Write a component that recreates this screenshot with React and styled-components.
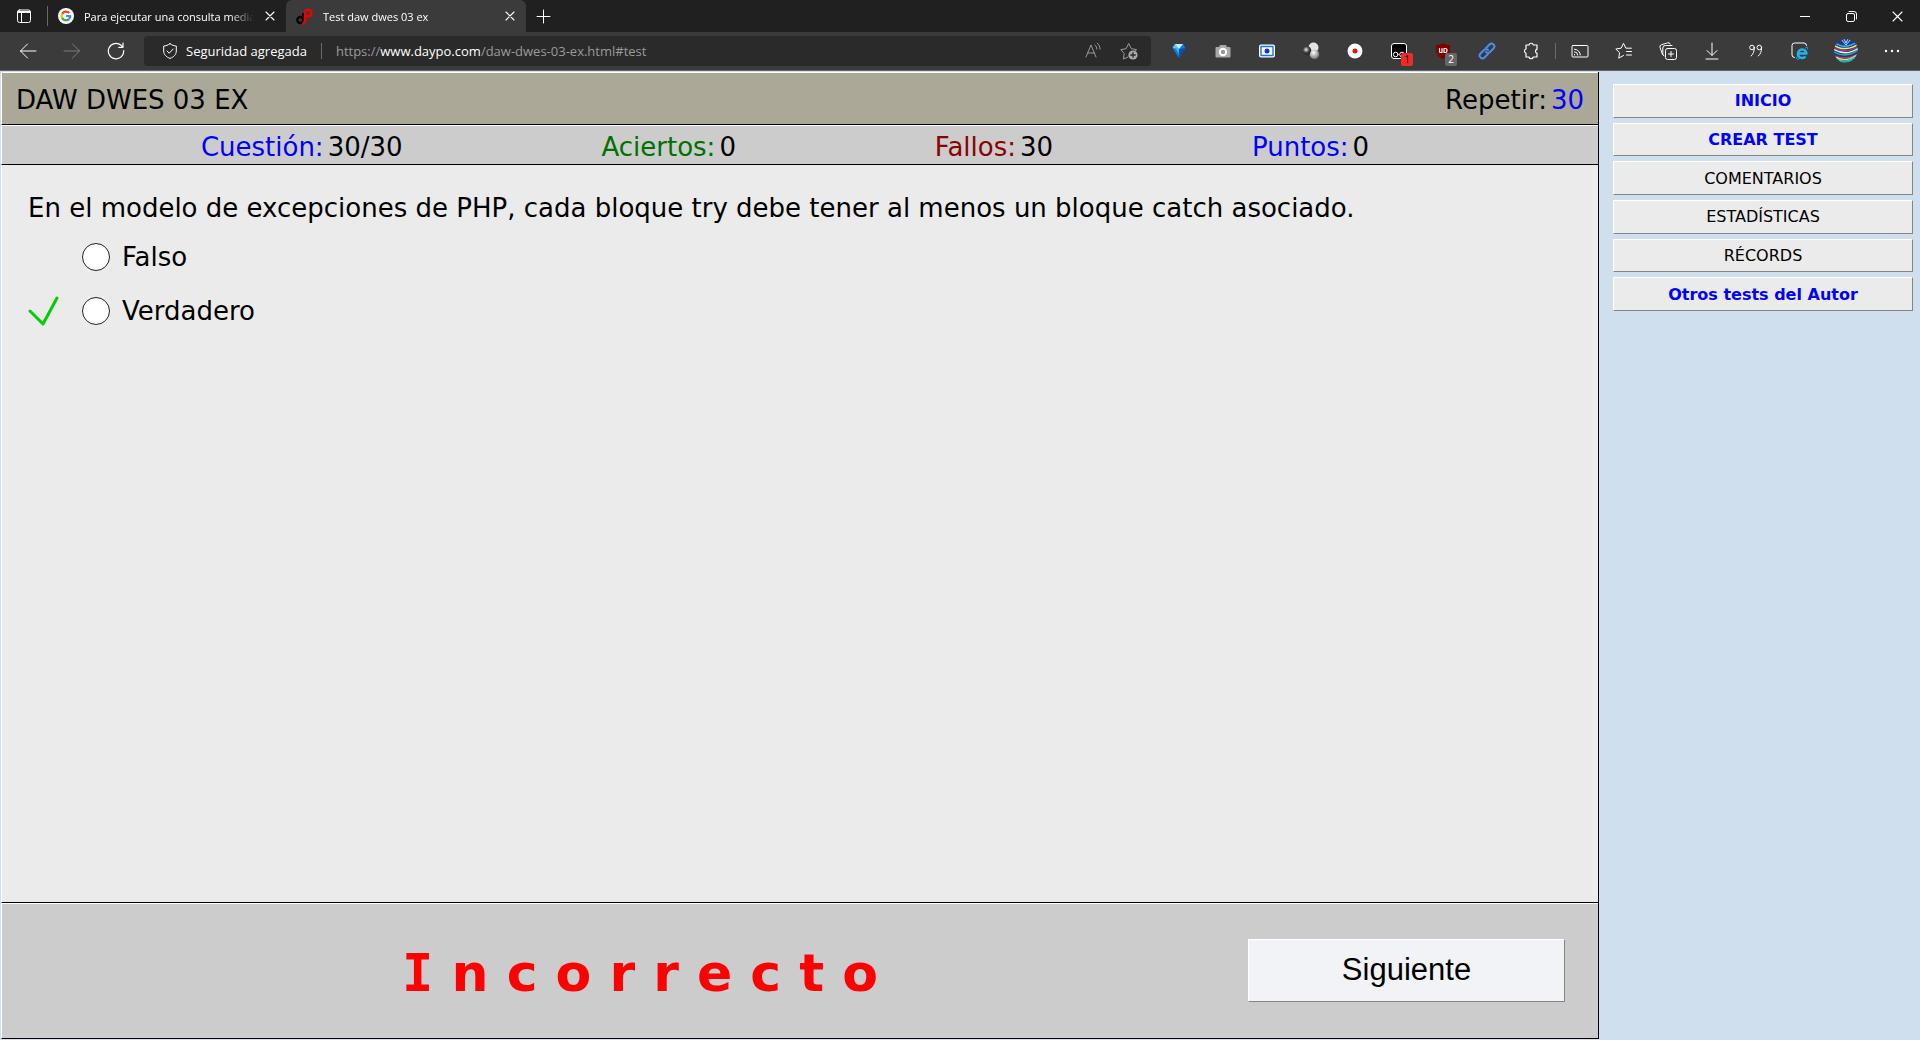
import React from "react";
import styled, { createGlobalStyle } from "styled-components";

const GlobalStyle = createGlobalStyle`
  *, *::before, *::after { box-sizing: border-box; }
  body {
    margin: 0;
    background: #cfdfee;
    font-family: "DejaVu Sans", Verdana, sans-serif;
    color: #000;
  }
`;

const Window = styled.div`
  display: flex;
  flex-direction: column;
  min-height: 100vh;
`;

/* ---------- browser chrome ---------- */

const Chrome = styled.header`
  font-family: "Open Sans", "Noto Sans", sans-serif;
  font-size: 13px;
  color: #fff;
  background: #3b3b3b;
  border-bottom: 1px solid #64646a;
`;

const TabStrip = styled.div`
  display: flex;
  height: 32px;
  background: #202020;
`;

const IconButton = styled.button`
  display: flex;
  align-items: center;
  justify-content: center;
  flex: 0 0 ${(p) => p.$width || 44}px;
  height: ${(p) => p.$height || 38}px;
  padding: 0;
  border: 0;
  background: none;
  color: ${(p) => p.$color || "#fff"};
  position: relative;

  svg { display: block; }
`;

const Divider = styled.span`
  flex: 0 0 1px;
  height: ${(p) => p.$height || 16}px;
  margin: 0 ${(p) => p.$gap || 0}px;
  background: #6a6a6a;
  align-self: center;
`;

const Tab = styled.div`
  display: flex;
  align-items: center;
  flex: 0 1 ${(p) => p.$width}px;
  min-width: 0;
  height: 32px;
  padding-left: 10px;
  gap: 10px;
  border-radius: 6px 6px 0 0;
  background: ${(p) => (p.$active ? "#3b3b3b" : "transparent")};
  font-size: 11px;

  svg { flex: none; }
`;

const TabTitle = styled.span`
  flex: 1;
  min-width: 0;
  white-space: nowrap;
  mask-image: linear-gradient(to left, transparent, #000 24px);
`;

const TabClose = styled(IconButton)`
  flex-basis: 32px;
  height: 32px;
  margin-left: -10px;
`;

const Spacer = styled.div`
  flex: 1;
`;

const Toolbar = styled.div`
  display: flex;
  align-items: center;
  height: 38px;
  padding: 0 6px;
`;

const AddressBar = styled.div`
  display: flex;
  align-items: center;
  flex: 1;
  min-width: 0;
  height: 30px;
  margin: 0 6px;
  padding-left: 18px;
  border-radius: 4px;
  background: #2a2a2a;
  white-space: nowrap;
`;

const SiteSecurity = styled.button`
  display: flex;
  align-items: center;
  gap: 8px;
  padding: 0;
  border: 0;
  background: none;
  color: #fff;
  font: inherit;
`;

const Url = styled.span`
  flex: 1;
  min-width: 0;
  overflow: hidden;
  color: #9a9a9a;

  b { color: #fff; font-weight: 400; }
`;

const Badge = styled.span`
  position: absolute;
  right: 8px;
  bottom: 4px;
  width: 12px;
  height: 13px;
  border-radius: 2px;
  background: ${(p) => p.$bg};
  color: ${(p) => p.$fg};
  font: 10px/13px "Open Sans", sans-serif;
  text-align: center;
`;

const line = { fill: "none", stroke: "currentColor", strokeLinecap: "round", strokeLinejoin: "round" };

const Icon = ({ size = 18, children, ...rest }) => (
  <svg width={size} height={size} viewBox={`0 0 ${size} ${size}`} aria-hidden="true" {...line} {...rest}>
    {children}
  </svg>
);

const TabActionsIcon = () => (
  <Icon size={16}>
    <rect x="1.5" y="2" width="13" height="12.5" rx="2" />
    <path d="M1.5 4.5h13M2 3.5h12M5.5 4.5v10" />
  </Icon>
);
const GoogleIcon = () => (
  <Icon size={16} stroke="none">
    <circle cx="8" cy="8" r="8" fill="#fff" />
    <g fill="none" strokeWidth="2.2" strokeLinecap="butt">
      <path d="M4.3 5.9A4.3 4.3 0 0 1 11.2 5" stroke="#ea4335" />
      <path d="M4.4 10.3a4.3 4.3 0 0 1 0-4.6" stroke="#fbbc05" />
      <path d="M11 11.1a4.3 4.3 0 0 1-6.8-1.2" stroke="#34a853" />
      <path d="M8 8h4.3c0 1.3-.5 2.4-1.5 3.2" stroke="#4285f4" />
    </g>
  </Icon>
);
const DaypoIcon = () => (
  <Icon size={17} strokeWidth="2.4" strokeLinecap="butt">
    <circle cx="4.3" cy="12" r="3" stroke="#050505" />
    <path d="M7.4 15.5V5" stroke="#050505" />
    <path d="M9 13V4.5a3.2 3.2 0 1 1 3.2 3.7H9" stroke="#f00000" />
    <path d="M9 12c0 2-.6 3.3-2.6 3.6" stroke="#f00000" />
  </Icon>
);
const CrossIcon = ({ size = 10 }) => (
  <Icon size={size} strokeWidth="1.1">
    <path d={`M1 1l${size - 2} ${size - 2}M${size - 1} 1l-${size - 2} ${size - 2}`} />
  </Icon>
);
const PlusIcon = () => <Icon size={15}><path d="M7.5 1v13M1 7.5h13" /></Icon>;
const MinimizeIcon = () => <Icon size={10} strokeLinecap="butt"><path d="M0 5.5h10" /></Icon>;
const RestoreIcon = () => (
  <Icon size={11}>
    <rect x=".5" y="2.5" width="8" height="8" rx="1.5" />
    <path d="M3 .5h5a2.5 2.5 0 0 1 2.5 2.5v5" />
  </Icon>
);
const BackIcon = () => <Icon><path d="M17 9H1.5M8.500 2L1.5 9l7 7" /></Icon>;
const ForwardIcon = () => <Icon><path d="M1 9h15.5M9.500 2l7 7-7 7" /></Icon>;
const ReloadIcon = () => (
  <Icon strokeWidth="1.2">
    <path d="M16.700 8.500a7.700 7.700 0 1 1-2.600-5.200l1.900 1.900M16 1v4.300h-4.300" />
  </Icon>
);
const ShieldIcon = () => (
  <Icon size={16}>
    <path d="M8 .7c2 1.500 4 2.200 6.300 2.300v5c0 3.500-2.500 6-6.300 7.400C4.200 14 1.700 11.500 1.700 8V3C4 2.900 6 2.200 8 .7z" />
    <path d="M5 8l2.200 2.200L11.200 6" />
  </Icon>
);
const ReadAloudIcon = () => (
  <Icon>
    <path d="M2 15L7 3l5 12M3.700 11h6.600" />
    <path d="M11 3c1.200 1 1.800 2.300 1.800 4M13.300 1.200c1.700 1.600 2.700 3.500 2.700 6" />
  </Icon>
);
const AddFavoriteIcon = () => (
  <Icon>
    <path d="M8 15l-4.600 2 .8-5.500L.8 7.600l5.300-.9L8.700 1.500l2.600 5.200 5.300.9-1.500 1.500" />
    <circle cx="13" cy="13" r="4.600" fill="#aaa" stroke="none" />
    <path d="M13 10.700v4.600M10.700 13h4.600" stroke="#2a2a2a" strokeWidth="1.3" />
  </Icon>
);
const GemIcon = () => (
  <Icon size={16} stroke="none">
    <path d="M1.500 5l2.500-4h8L14.500 5 8 15z" fill="#0b7fe0" />
    <path d="M1.500 5L4 1l4 5z" fill="#5fc8ff" />
    <path d="M4 1h8L8 6z" fill="#c3efff" />
    <path d="M8 6l6.500-1L8 15z" fill="#0a4fa0" />
    <path d="M4.500 5.500L8 6v5z" fill="#36b4ff" />
  </Icon>
);
const CameraIcon = () => (
  <Icon size={16} stroke="none">
    <path d="M5 2h6l1 2h2.500q1 0 1 1v8.500q0 1-1 1h-13q-1 0-1-1V5q0-1 1-1H4z" fill="#a9a9a9" />
    <circle cx="8" cy="9" r="3.200" fill="#999" stroke="#fff" strokeWidth="1.9" />
  </Icon>
);
const CaptureIcon = () => (
  <Icon size={16} stroke="none">
    <rect y="1.500" width="16" height="13" rx="2" fill="#fff" />
    <rect x="2" y="3.500" width="12" height="9" stroke="#1378e8" strokeWidth="1.4" />
    <circle cx="8" cy="8" r="2.500" fill="#1d2be0" />
  </Icon>
);
const SpheresIcon = () => (
  <svg width="18" height="18" viewBox="0 0 18 18" aria-hidden="true">
    <defs>
      <radialGradient id="ball" cx=".4" cy=".3" r=".75">
        <stop offset="0" stopColor="#fff" /><stop offset="1" stopColor="#666" />
      </radialGradient>
      <radialGradient id="darkBall" cx=".4" cy=".4" r=".7">
        <stop offset="0" stopColor="#eee" /><stop offset=".5" stopColor="#444" /><stop offset="1" stopColor="#101010" />
      </radialGradient>
    </defs>
    <circle cx="11.5" cy="5.5" r="5" fill="#e4e4e4" />
    <circle cx="5" cy="8.500" r="4.300" fill="url(#darkBall)" />
    <circle cx="12.500" cy="12.500" r="4.700" fill="url(#ball)" />
  </svg>
);
const RecordIcon = () => (
  <Icon size={16} stroke="none">
    <circle cx="8" cy="8" r="7.500" fill="#fff" />
    <circle cx="8" cy="8" r="2.500" fill="#e81010" />
  </Icon>
);
const MonkeyIcon = () => (
  <Icon>
    <rect x="1.5" y="1.5" width="15" height="15" rx="2.500" fill="#000" stroke="#fff" />
    <circle cx="5.700" cy="12.500" r="2.300" />
    <circle cx="12" cy="12.500" r="2.300" />
  </Icon>
);
const UBlockIcon = () => (
  <Icon size={16} stroke="none">
    <path d="M8 0c2 1.300 4 2 7 2v5c0 4.500-2.500 7-7 9-4.500-2-7-4.500-7-9V2c3 0 5-.7 7-2z" fill="#800000" />
    <path d="M4.500 5.500v3q0 1 1 1h1.500v-4M9 5.500v4h1.500q1.500 0 1.500-2t-1.500-2z" stroke="#fff" strokeWidth="1.2" />
  </Icon>
);
const LinkIcon = () => (
  <Icon stroke="#4a90f0" strokeWidth="1.9">
    <path d="M8 6l3.500-3.500a2.800 2.800 0 0 1 4 4L12 10a2.800 2.800 0 0 1-4 0" />
    <path d="M10 12l-3.500 3.500a2.800 2.800 0 0 1-4-4L6 8a2.800 2.800 0 0 1 4 0" />
  </Icon>
);
const PuzzleIcon = () => (
  <Icon strokeWidth="1.2">
    <path d="M4 3h3a2.200 2.200 0 0 1 4.300 0H15v4.300a2 2 0 0 0 0 3.900V15h-3.700a2.200 2.200 0 0 1-4.300 0H4v-3.800a2.200 2.200 0 0 1 0-4.200z" />
  </Icon>
);
const CastIcon = () => (
  <Icon>
    <rect x="1" y="3.500" width="16" height="11.500" rx="1" />
    <path d="M3.500 12.500v.5M3.500 9.800a3.200 3.200 0 0 1 3.200 3.200M3.500 7.200a5.800 5.800 0 0 1 5.800 5.800" />
  </Icon>
);
const FavoritesIcon = () => (
  <Icon>
    <path d="M8.500 13.500l-4.800 2.700.9-5.500L.8 7l5.300-.8L8.500 1.300l2.400 4.900h5.500M11.500 9.500h5M11.500 13h5" />
  </Icon>
);
const CollectionsIcon = () => (
  <Icon>
    <rect x="6.500" y="6.500" width="11" height="11" rx="2" />
    <path d="M12 9.500v5M9.500 12h5M3.500 12.500L1 5.300a2 2 0 0 1 1.300-2.500l6.500-2a2 2 0 0 1 2.400 1.200M5 14a3 3 0 0 1-1.200-2.500V6a2.500 2.500 0 0 1 2.500-2.500H13" />
  </Icon>
);
const DownloadIcon = () => <Icon><path d="M9 1v12M4 8.500L9 13.500l5-5M3 17h12" /></Icon>;
const QuoteIcon = () => (
  <Icon>
    <circle cx="5" cy="5.500" r="2.300" />
    <path d="M7.300 5.500c0 4-1 6.500-3.300 8.500" />
    <circle cx="12.300" cy="5.500" r="2.300" />
    <path d="M14.600 5.500c0 4-1 6.500-3.300 8.500" />
  </Icon>
);
const IeModeIcon = () => (
  <Icon>
    <path d="M3.500 15.500a2.500 2.500 0 0 1-2.500-2.500V3.500A2.500 2.500 0 0 1 3.500 1h9.500a2.500 2.500 0 0 1 2.500 2.500" />
    <path d="M7 11.500h8.500a4.300 4.300 0 1 0-1 3" stroke="#1eb4f0" strokeWidth="2.4" strokeLinecap="butt" />
    <path d="M14.500 6c1.500-1.500 2.800-1 2 1M6.500 14.500c-2 2.500-.5 3.500 2 2" stroke="#1eb4f0" />
  </Icon>
);
const AvatarIcon = () => (
  <svg width="24" height="24" viewBox="0 0 24 24" aria-hidden="true">
    <defs><clipPath id="face"><circle cx="12" cy="12" r="12" /></clipPath></defs>
    <g clipPath="url(#face)" fill="none" strokeWidth="1.4">
      <rect width="24" height="24" fill="#163f94" />
      <path d="M0 3q11 9 24-1" stroke="#35b4e8" />
      <path d="M0 6q5 4 12 3.500T24 5" stroke="#e8f06a" />
      <path d="M0 8.500q12 7 24-1" stroke="#d02c50" />
      <path d="M0 10.500q12 7 24-1" stroke="#d9f4ff" />
      <path d="M0 13q12 7 24-2" stroke="#2cc05c" />
      <path d="M0 15q12 6 24-1.500" stroke="#1430d0" />
      <path d="M0 17q12 5 24-2" stroke="#e03c58" />
      <path d="M2 18.500q10 5 20-2" stroke="#e8e040" />
      <path d="M3 20.500q9 4 18-2" stroke="#3ac8e0" />
      <path d="M5 22.500q8 2 14-2" stroke="#30b860" />
      <path d="M7 0l5 6 5-6M10 0l2 4M14 0l-2 4" stroke="#bcd8f4" strokeWidth="1" />
    </g>
  </svg>
);
const MoreIcon = () => (
  <Icon stroke="none">
    {[3, 9, 15].map((x) => <circle key={x} cx={x} cy="9" r="1.2" fill="#fff" />)}
  </Icon>
);

const extensions = [
  { label: "Gema", icon: <GemIcon /> },
  { label: "Captura", icon: <CameraIcon /> },
  { label: "Captura de pantalla", icon: <CaptureIcon /> },
  { label: "Esferas", icon: <SpheresIcon /> },
  { label: "Grabar", icon: <RecordIcon /> },
  { label: "Scripts", icon: <MonkeyIcon />, badge: { text: "1", bg: "#ee2b2b", fg: "#111" } },
  { label: "Bloqueador", icon: <UBlockIcon />, badge: { text: "2", bg: "#666", fg: "#fff" } },
  { label: "Enlaces", icon: <LinkIcon /> },
  { label: "Extensiones", icon: <PuzzleIcon /> },
];

const browserTools = [
  { label: "Transmitir", icon: <CastIcon /> },
  { label: "Favoritos", icon: <FavoritesIcon /> },
  { label: "Colecciones", icon: <CollectionsIcon /> },
  { label: "Descargas", icon: <DownloadIcon /> },
  { label: "Citas", icon: <QuoteIcon /> },
  { label: "Modo Internet Explorer", icon: <IeModeIcon /> },
  { label: "Perfil", icon: <AvatarIcon />, width: 48 },
  { label: "Más", icon: <MoreIcon /> },
];

const BrowserTab = ({ icon, title, width, active }) => (
  <Tab $width={width} $active={active}>
    {icon}
    <TabTitle>{title}</TabTitle>
    <TabClose aria-label="Cerrar pestaña"><CrossIcon /></TabClose>
  </Tab>
);

function BrowserChrome() {
  return (
    <Chrome>
      <TabStrip>
        <IconButton $width={47} $height={32} aria-label="Acciones de pestaña"><TabActionsIcon /></IconButton>
        <Divider $height={20} />
        <BrowserTab width={238} icon={<GoogleIcon />} title="Para ejecutar una consulta media" />
        <BrowserTab width={240} icon={<DaypoIcon />} title="Test daw dwes 03 ex" active />
        <IconButton $width={34} $height={32} aria-label="Nueva pestaña"><PlusIcon /></IconButton>
        <Spacer />
        <IconButton $width={46} $height={32} aria-label="Minimizar"><MinimizeIcon /></IconButton>
        <IconButton $width={46} $height={32} aria-label="Restaurar"><RestoreIcon /></IconButton>
        <IconButton $width={46} $height={32} aria-label="Cerrar"><CrossIcon size={11} /></IconButton>
      </TabStrip>
      <Toolbar>
        <IconButton aria-label="Atrás"><BackIcon /></IconButton>
        <IconButton aria-label="Adelante" $color="#7d7d7d"><ForwardIcon /></IconButton>
        <IconButton aria-label="Actualizar"><ReloadIcon /></IconButton>
        <AddressBar>
          <SiteSecurity><ShieldIcon />Seguridad agregada</SiteSecurity>
          <Divider $gap={14} />
          <Url>https://<b>www.daypo.com</b>/daw-dwes-03-ex.html#test</Url>
          <IconButton $width={28} $height={30} $color="#9a9a9a" aria-label="Leer en voz alta"><ReadAloudIcon /></IconButton>
          <IconButton $width={44} $height={30} $color="#9a9a9a" aria-label="Agregar a favoritos"><AddFavoriteIcon /></IconButton>
        </AddressBar>
        {extensions.map(({ label, icon, badge }) => (
          <IconButton key={label} aria-label={label}>
            {icon}
            {badge && <Badge $bg={badge.bg} $fg={badge.fg}>{badge.text}</Badge>}
          </IconButton>
        ))}
        <Divider $gap={2} />
        {browserTools.map(({ label, icon, width }) => (
          <IconButton key={label} aria-label={label} $width={width}>{icon}</IconButton>
        ))}
      </Toolbar>
    </Chrome>
  );
}

/* ---------- test page ---------- */

const Page = styled.div`
  display: flex;
  flex: 1;
  padding: 1px 0 1px 1px;
`;

const Quiz = styled.main`
  display: flex;
  flex-direction: column;
  flex: 1;
  min-width: 0;
  border-right: 1px solid #000;
  font-size: 26px;
  line-height: 32px;
`;

const Panel = styled.div`
  border: 1px solid;
  border-color: #fff transparent #000 #fff;
  border-right: 0;
`;

const TitleBar = styled(Panel)`
  display: flex;
  align-items: center;
  justify-content: space-between;
  height: 53px;
  padding: 2px 14px 0;
  background: #aba898;
`;

const Title = styled.h1`
  margin: 0;
  font: inherit;
`;

const ScoreBar = styled(Panel)`
  display: flex;
  align-items: center;
  justify-content: space-evenly;
  height: 40px;
  padding: 4px 30px 0 0;
  background: #ccc;
`;

const StatLine = styled.span`
  display: inline-flex;
  gap: 4px;
  white-space: nowrap;
`;

const Tint = styled.span`
  color: ${(p) => p.$color || "#000"};
`;

const QuestionArea = styled(Panel)`
  flex: 1;
  padding: 26px;
  border-top-color: #ebebeb;
  background: #ebebeb;
`;

const Answers = styled.fieldset`
  margin: 0;
  padding: 0;
  border: 0;
  min-width: 0;
`;

const Question = styled.legend`
  padding: 0 0 6px;
`;

const Answer = styled.label`
  display: grid;
  grid-template-columns: 54px 28px 1fr;
  align-items: center;
  height: 54px;
`;

const Mark = styled.span`
  display: flex;
`;

const Radio = styled.input`
  appearance: none;
  width: 28px;
  height: 28px;
  margin: 0;
  border: 1px solid #222;
  border-radius: 50%;
  background: #fff;
`;

const AnswerText = styled.span`
  padding-left: 12px;
`;

const ResultBar = styled(Panel)`
  display: flex;
  align-items: center;
  height: 136px;
  padding: 0 33px 2px 0;
  background: #ccc;
`;

const Result = styled.output`
  flex: 1;
  padding: 6px 0 0 30px;
  color: #f00;
  font-size: 52px;
  font-weight: 700;
  line-height: 64px;
  text-align: center;
`;

const SerifCapital = styled.span`
  font-family: "DejaVu Sans Mono", monospace;
`;

const raised = `
  border: 1px solid;
  border-color: #fff #858585 #858585 #fff;
`;

const NextButton = styled.button`
  ${raised}
  flex: 0 0 317px;
  height: 63px;
  padding: 0;
  background: #f1f3f7;
  color: #000;
  font: 31px "Liberation Sans", Arial, sans-serif;
`;

const Sidebar = styled.nav`
  flex: 0 0 321px;
  padding: 12px 7px 12px 14px;
`;

const Menu = styled.ul`
  display: grid;
  grid-auto-rows: 1fr;
  gap: 5px;
  height: 227px;
  margin: 0;
  padding: 0;
  list-style: none;
`;

const MenuLink = styled.a`
  ${raised}
  display: flex;
  align-items: center;
  justify-content: center;
  height: 100%;
  background: #ebebeb;
  color: ${(p) => (p.$strong ? "#00f" : "#000")};
  font-size: 16px;
  font-weight: ${(p) => (p.$strong ? 700 : 400)};
  text-decoration: none;
`;

const Stat = ({ label, labelColor, value, valueColor }) => (
  <StatLine>
    <Tint $color={labelColor}>{label}</Tint>
    <Tint $color={valueColor}>{value}</Tint>
  </StatLine>
);

const scores = [
  { label: "Cuestión:", labelColor: "#00f", value: "30/30" },
  { label: "Aciertos:", labelColor: "#007000", value: "0" },
  { label: "Fallos:", labelColor: "#8b0000", value: "30" },
  { label: "Puntos:", labelColor: "#00f", value: "0" },
];

const answers = [
  { text: "Falso", correct: false },
  { text: "Verdadero", correct: true },
];

const menu = [
  { text: "INICIO", strong: true },
  { text: "CREAR TEST", strong: true },
  { text: "COMENTARIOS" },
  { text: "ESTADÍSTICAS" },
  { text: "RÉCORDS" },
  { text: "Otros tests del Autor", strong: true },
];

const CheckMark = () => (
  <svg width="32" height="32" viewBox="0 0 32 32" role="img" aria-label="Correcta">
    <path d="M2 16L15 29L29 3" fill="none" stroke="#00cf00" strokeWidth="3" strokeLinecap="round" strokeLinejoin="round" />
  </svg>
);

export default function App() {
  return (
    <Window>
      <GlobalStyle />
      <BrowserChrome />
      <Page>
        <Quiz>
          <TitleBar>
            <Title>DAW DWES 03 EX</Title>
            <Stat label="Repetir:" value="30" valueColor="#00f" />
          </TitleBar>
          <ScoreBar>
            {scores.map((s) => <Stat key={s.label} {...s} />)}
          </ScoreBar>
          <QuestionArea>
            <Answers>
              <Question>
                En el modelo de excepciones de PHP, cada bloque try debe tener al menos un bloque catch asociado.
              </Question>
              {answers.map(({ text, correct }) => (
                <Answer key={text}>
                  <Mark>{correct && <CheckMark />}</Mark>
                  <Radio type="radio" name="answer" />
                  <AnswerText>{text}</AnswerText>
                </Answer>
              ))}
            </Answers>
          </QuestionArea>
          <ResultBar>
            <Result><SerifCapital>I</SerifCapital> n c o r r e c t o</Result>
            <NextButton type="button">Siguiente</NextButton>
          </ResultBar>
        </Quiz>
        <Sidebar>
          <Menu>
            {menu.map(({ text, strong }) => (
              <li key={text}><MenuLink href="#test" $strong={strong}>{text}</MenuLink></li>
            ))}
          </Menu>
        </Sidebar>
      </Page>
    </Window>
  );
}
